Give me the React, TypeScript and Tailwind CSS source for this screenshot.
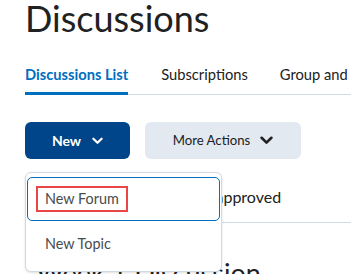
const Chevron = ({ className }: { className: string }) => (
  <svg viewBox="0 0 12 8" className={className} fill="none">
    <path d="M1.5 1.5 L6 6 L10.5 1.5" stroke="currentColor" strokeWidth="2.4" strokeLinecap="round" strokeLinejoin="round" />
  </svg>
)

const App = () => {
  return (
    <div className="relative h-[274px] w-[351px] overflow-hidden bg-white font-['Lato',sans-serif] text-[#202122]">
      <h1 className="-mt-[3px] pl-[25px] text-[36px] leading-[43px] whitespace-nowrap">Discussions</h1>

      <div className="ml-[25px] mt-[24px] flex border-b border-[#d3d9e3] text-[14.7px] leading-[20px] whitespace-nowrap">
        <div className="relative pb-[10px] font-bold text-[#006fbf]">
          Discussions List
          <span className="absolute -bottom-px left-0 h-[3px] w-full bg-[#006fbf]" />
        </div>
        <div className="ml-[33px]">Subscriptions</div>
        <div className="ml-[32px]">Group and Section</div>
      </div>

      <div className="ml-[25px] mt-[27px] flex gap-[15px]">
        <button className="flex h-[37px] w-[105px] items-center justify-center gap-[11px] rounded-[6px] bg-[#004489] text-[14px] font-bold text-white">
          New
          <Chevron className="h-[8px] w-[11px]" />
        </button>
        <button className="flex h-[37px] w-[156px] items-center justify-center gap-[10px] rounded-[6px] bg-[#e3e9f1] text-[13.2px] text-[#202122]">
          More Actions
          <Chevron className="h-[9px] w-[13px]" />
        </button>
      </div>

      <div className="mt-[26px] pl-[195px] text-[16px] leading-[24px] text-[#202122]">Unapproved</div>
      <div className="ml-[25px] mt-[13px] border-t border-[#d3d9e3]" />
      <div className="mt-[34px] pl-[36px] text-[27px] leading-[32px] whitespace-nowrap">Week 1 Discussion</div>

      <div className="absolute left-[25px] top-[172px] w-[197px] rounded-[6px] border border-[#d3d9e3] bg-white px-px py-[4px] shadow-sm">
        <div className="flex h-[44px] items-center rounded-[5px] border border-[#006fbf] pl-[8px]">
          <span className="border-[2px] border-[#ea4646] px-[7px] py-px text-[14.4px] leading-[20px] text-[#494c4e]">New Forum</span>
        </div>
        <div className="flex h-[46px] items-center pl-[18px] text-[14.4px] text-[#494c4e]">New Topic</div>
      </div>
    </div>
  )
}
export default App
